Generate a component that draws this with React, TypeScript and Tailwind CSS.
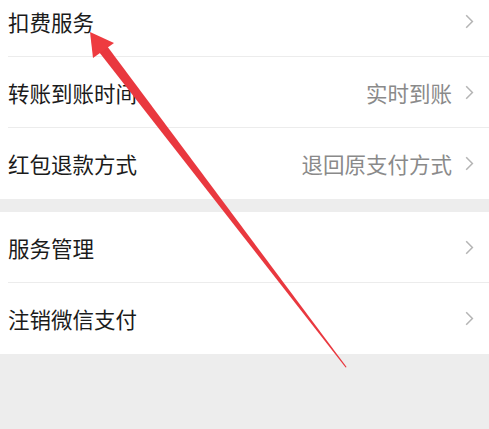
type Row = { label: string; value?: string };

const groupOne: Row[] = [
    { label: '扣费服务' },
    { label: '转账到账时间', value: '实时到账' },
    { label: '红包退款方式', value: '退回原支付方式' },
];

const groupTwo: Row[] = [
    { label: '服务管理' },
    { label: '注销微信支付' },
];

const Chevron = () => (
    <svg width="9" height="15" viewBox="0 0 9 15" fill="none" className="shrink-0">
        <polyline points="1.2,1.2 7.4,7.5 1.2,13.8" stroke="#b4b4b4" strokeWidth="1.5" />
    </svg>
);

const SettingRow = ({ row, last }: { row: Row; last: boolean }) => (
    <div className="relative flex h-[71px] items-center pl-2 pr-[15px]">
        <span className="flex-1 text-[21.5px] leading-none text-[#1b1b1b]">{row.label}</span>
        {row.value && (
            <span className="mr-[13px] text-[21.5px] leading-none text-[#8a8a8a]">{row.value}</span>
        )}
        <Chevron />
        {!last && <div className="absolute bottom-0 left-2 right-0 h-px bg-[#ececec]"></div>}
    </div>
);

const App = () => {
    return (
        <div
            className="relative h-[429px] w-[489px] overflow-hidden bg-[#ededed]"
            style={{ fontFamily: '"Noto Sans CJK SC", "Noto Sans", sans-serif' }}
        >
            <div className="-mt-[14px] bg-white">
                {groupOne.map((row, i) => (
                    <SettingRow key={row.label} row={row} last={i === groupOne.length - 1} />
                ))}
            </div>
            <div className="mt-[13px] bg-white">
                {groupTwo.map((row, i) => (
                    <SettingRow key={row.label} row={row} last={i === groupTwo.length - 1} />
                ))}
            </div>

            {/* annotation arrow */}
            <svg className="pointer-events-none absolute inset-0" width="489" height="429" viewBox="0 0 489 429">
                <polygon points="99,52 107,46 346.6,367 345.6,367.4" fill="#e9383f" />
                <polygon points="90,32 114,43 93,58" fill="#ee3b40" />
            </svg>
        </div>
    );
};

export default App;
